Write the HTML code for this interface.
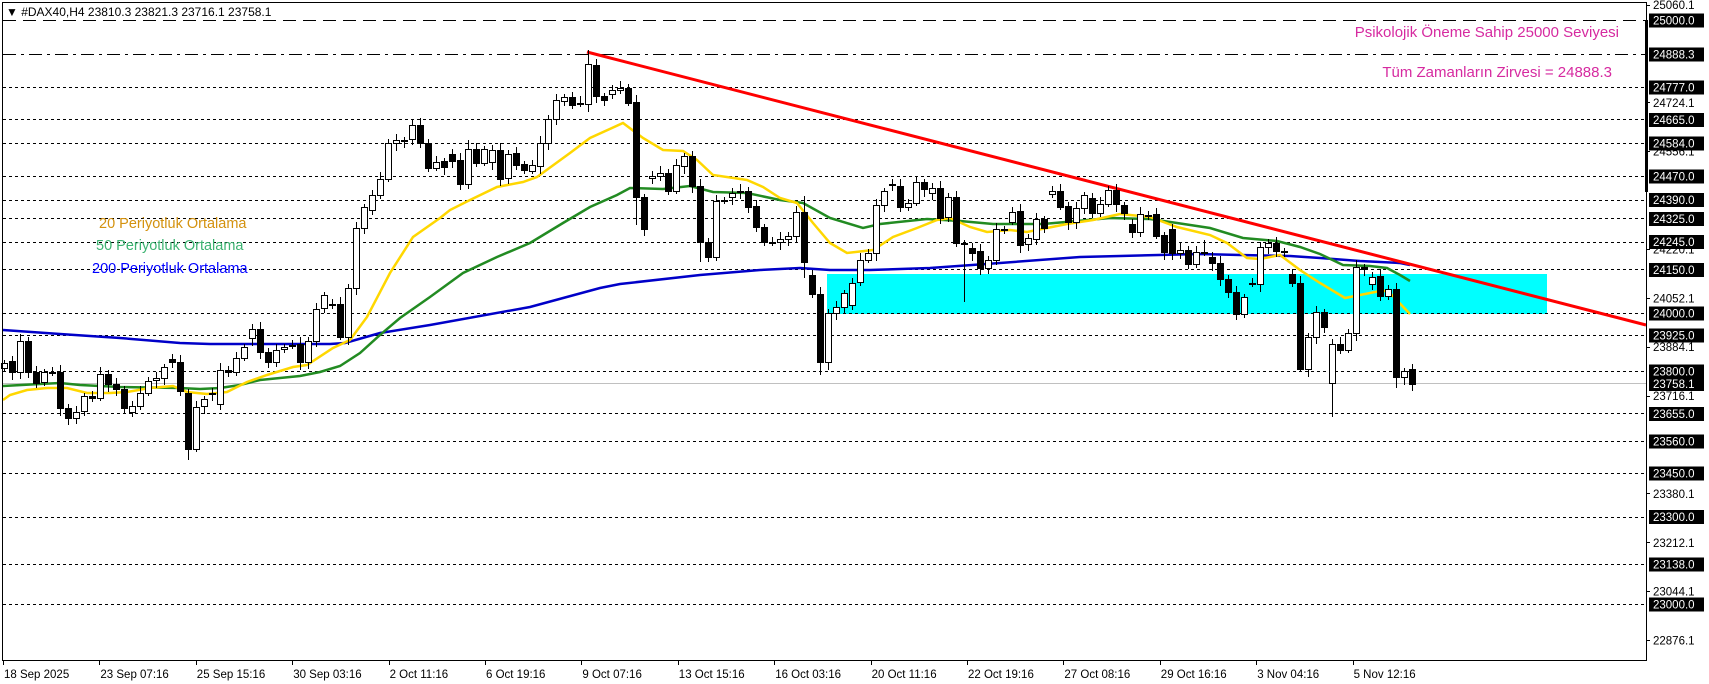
<!DOCTYPE html>
<html><head><meta charset="utf-8"><style>
html,body{margin:0;padding:0;background:#fff;}
svg{display:block;}
text{font-family:"Liberation Sans",sans-serif;}
</style></head><body>
<svg id="c" width="1709" height="684" xmlns="http://www.w3.org/2000/svg" shape-rendering="crispEdges"></svg>
<script>
var s=document.getElementById('c');var h='';
function P(v){return Math.round(v)+0.5;}
// background
h+='<rect x="0" y="0" width="1709" height="684" fill="#fff"/>';
// cyan zone
h+='<rect x="827" y="274" width="720" height="40" fill="#00ffff"/>';
// levels
function Y(p){return 22+(25000-p)*0.291;}
var lv=[24777,24665,24584,24470,24390,24325,24245,24150,24000,23925,23800,23655,23560,23450,23300,23138,23000];
lv.forEach(function(p){h+='<line x1="3" x2="1646" y1="'+P(Y(p))+'" y2="'+P(Y(p))+'" stroke="#000" stroke-dasharray="3,3"/>';});
h+='<line x1="3" x2="1646" y1="20.5" y2="20.5" stroke="#000" stroke-dasharray="13,7"/>';
h+='<line x1="3" x2="1646" y1="54.5" y2="54.5" stroke="#000" stroke-dasharray="13,5,3,5"/>';
h+='<line x1="3" x2="1646" y1="383.5" y2="383.5" stroke="#c0c0c0"/>';
// MAs
function pl(pts,col,w){h+='<polyline fill="none" stroke="'+col+'" stroke-width="'+w+'" shape-rendering="auto" points="'+pts+'"/>';}
pl("3,330 60,334 120,338 180,343 210,344 330,344 345,343 380,333 430,325 530,307 600,288 620,284 700,275 760,270 800,268 830,270 870,270 930,268 1000,263 1080,257 1120,256 1200,254 1240,255 1290,256 1320,258 1360,261 1400,263 1410,265","#0000c8",2.5);
pl("3,386 40,384 60,383 80,385 120,387 180,388 200,389 220,388 240,385 260,380 300,376 320,372 340,366 360,353 380,335 400,318 430,297 463,273 497,257 530,243 563,223 590,207 617,195 630,188 663,189 690,186 713,192 747,193 780,200 803,203 830,218 863,228 880,224 927,219 960,221 993,224 1043,224 1077,221 1110,218 1150,219 1177,223 1210,228 1243,238 1277,241 1300,247 1320,254 1343,265 1370,266 1387,268 1400,275 1410,281","#228b22",2.5);
pl("3,400 10,395 27,390 47,388 67,388 87,393 110,393 127,392 150,388 173,386 187,392 207,394 227,392 247,382 267,375 293,367 307,365 333,348 350,340 367,317 390,273 413,237 440,218 450,210 470,200 497,187 523,182 537,177 570,153 590,138 623,123 643,138 663,150 683,151 697,160 713,175 747,180 763,187 780,198 797,203 813,223 830,243 847,253 873,250 893,237 917,228 937,220 950,218 970,227 987,232 1010,230 1027,232 1047,228 1067,224 1093,220 1120,214 1150,217 1177,227 1210,235 1227,243 1247,258 1260,259 1280,255 1300,270 1320,283 1345,298 1360,295 1380,291 1388,291 1410,314","#ffd700",2.5);
// trend line
h+='<line x1="587" y1="52" x2="1646" y2="325" stroke="#ff0000" stroke-width="3" shape-rendering="auto"/>';
// candles
var d="363,368,w 361,372,b 341,372,w 341,372,b 372,383,b 372,382,w 372,373,w 372,408,b 408,418,b 412,418,w 396,411,w 396,398,b 374,398,w 374,384,b 384,389,b 389,408,b 406,412,w 393,406,w 381,393,w 378,380,w 367,378,w 359,362,b 362,391,b 393,449,b 407,449,w 399,406,w 393,394,w 370,404,w 370,372,b 358,372,w 347,358,w 329,338,w 329,352,b 352,362,b 350,362,w 347,349,w 345,346,w 344,362,b 341,362,w 309,341,w 295,308,w 304,305,w 304,337,b 288,337,w 228,288,w 207,228,w 195,210,w 179,195,w 143,179,w 140,143,w 140,141,w 125,139,w 125,143,b 143,168,b 162,168,w 161,167,b 154,161,b 160,184,b 149,184,w 149,163,b 149,163,w 150,162,w 150,179,b 154,178,w 153,165,b 164,170,b 165,171,w 143,166,w 119,143,w 100,119,w 97,101,w 97,105,b 103,104,w 64,104,w 65,96,b 96,100,b 90,94,w 88,90,w 88,103,b 102,197,b 197,229,b 176,178,w 173,176,w 173,191,b 165,191,w 156,166,w 156,186,b 186,242,b 242,257,b 201,257,w 200,201,w 193,197,w 191,192,w 191,207,b 206,227,b 227,242,b 242,243,w 239,242,w 236,239,w 212,236,w 212,262,b 275,294,b 294,362,b 313,362,w 307,313,w 293,307,w 283,305,w 260,282,w 253,260,w 205,253,w 191,205,w 184,185,w 186,207,b 203,207,w 182,203,w 182,189,b 188,193,w 188,218,b 197,217,w 197,243,b 243,244,w 248,253,b 251,268,b 260,268,w 229,260,w 229,230,w 212,222,w 211,245,b 238,244,w 219,239,w 219,228,b 191,194,w 191,207,b 206,222,b 208,222,w 195,208,w 198,213,b 204,213,w 190,204,w 190,204,b 205,213,b 224,232,b 214,232,w 215,216,w 214,236,b 235,252,b 229,253,b 250,253,w 250,264,b 252,264,w 252,253,w 257,263,b 263,279,b 279,292,b 292,314,b 297,314,w 283,284,w 247,284,w 243,247,w 243,251,b 251,252,w 274,283,b 283,369,b 337,369,w 312,337,w 312,327,b 344,383,w 344,350,b 333,350,w 267,333,w 267,269,b 277,284,w 276,296,b 289,296,w 289,377,b 371,377,w 369,384,b".split(' ');
var lowx={23:460,79:225,102:375,120:302,166:417,174:388,154:320,162:372,43:345,87:262,100:278};
var hix={73:50,79:95,58:140,100:196,169:260,150:240,157:242};
d.forEach(function(e,i){var a=e.split(',');var t=+a[0],b=+a[1],c=a[2];var x=4+8*i;
 var k1=3+((i*7)%5),k2=3+((i*11)%6);var hi=hix[i]||t-k1,lo=lowx[i]||b+k2;
 h+='<line x1="'+(x+0.5)+'" x2="'+(x+0.5)+'" y1="'+hi+'" y2="'+lo+'" stroke="#000"/>';
 var bh=Math.max(1,b-t);
 h+='<rect x="'+(x-2.5)+'" y="'+(t+0.5)+'" width="6" height="'+bh+'" fill="'+(c=='b'?'#000':'#fff')+'" stroke="#000"/>';
});
// frame
h+='<rect x="2.5" y="2.5" width="1644" height="658" fill="none" stroke="#000"/>';
h+='<rect x="1645" y="20" width="3" height="172" fill="#000"/>';
// header
h+='<text x="6" y="16" font-size="12" fill="#000">&#9660; #DAX40,H4  23810.3 23821.3 23716.1 23758.1</text>';
// annotations
h+='<text x="1619" y="37" font-size="15" fill="#d62aa0" text-anchor="end">Psikolojik Öneme Sahip 25000 Seviyesi</text>';
h+='<text x="1612" y="77" font-size="15" fill="#d62aa0" text-anchor="end">Tüm Zamanların Zirvesi = 24888.3</text>';
h+='<text x="99" y="228" font-size="14.5" fill="#d4920f">20 Periyotluk Ortalama</text>';
h+='<text x="96" y="250" font-size="14.5" fill="#3cb371">50 Periyotluk Ortalama</text>';
h+='<text x="92" y="273" font-size="14.5" fill="#0000ff">200 Periyotluk Ortalama</text>';
// axis plain labels
[25060.1,24724.1,24556.1,24220.1,24052.1,23884.1,23716.1,23380.1,23212.1,23044.1,22876.1].forEach(function(p){var y=Y(p);
 h+='<line x1="1647" x2="1650" y1="'+P(y)+'" y2="'+P(y)+'" stroke="#000"/>';
 h+='<text x="1653" y="'+(y+4.5)+'" font-size="11.5" fill="#000">'+p.toFixed(1)+'</text>';});
// boxed labels
var bl=[[25000,'25000.0'],[24888.3,'24888.3'],[24777,'24777.0'],[24665,'24665.0'],[24584,'24584.0'],[24470,'24470.0'],[24390,'24390.0'],[24325,'24325.0'],[24245,'24245.0'],[24150,'24150.0'],[24000,'24000.0'],[23925,'23925.0'],[23800,'23800.0'],[23758.1,'23758.1'],[23655,'23655.0'],[23560,'23560.0'],[23450,'23450.0'],[23300,'23300.0'],[23138,'23138.0'],[23000,'23000.0']];
bl.forEach(function(q){var y=Y(q[0]);if(q[0]==25000)y=20;if(q[0]==24888.3)y=54;
 h+='<rect x="1649" y="'+(y-6.5)+'" width="55" height="14" fill="#000"/>';
 h+='<text x="1653" y="'+(y+4.5)+'" font-size="11.5" fill="#fff">'+q[1]+'</text>';});
// dates
var dt=['18 Sep 2025','23 Sep 07:16','25 Sep 15:16','30 Sep 03:16','2 Oct 11:16','6 Oct 19:16','9 Oct 07:16','13 Oct 15:16','16 Oct 03:16','20 Oct 11:16','22 Oct 19:16','27 Oct 08:16','29 Oct 16:16','3 Nov 04:16','5 Nov 12:16'];
dt.forEach(function(t,i){var x=3+96.4*i;
 h+='<line x1="'+P(x)+'" x2="'+P(x)+'" y1="661" y2="665" stroke="#000"/>';
 h+='<text x="'+(x+1)+'" y="678" font-size="11.5" fill="#000">'+t+'</text>';});
s.innerHTML=h;
</script>
</body></html>
